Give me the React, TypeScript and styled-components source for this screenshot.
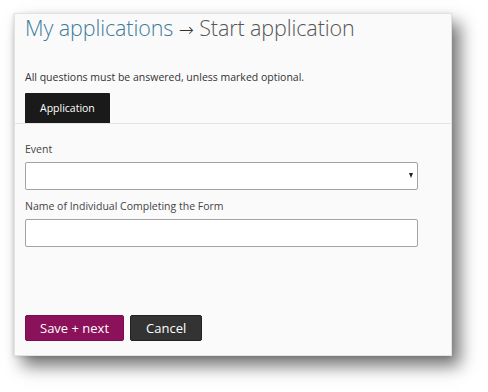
import React from "react";
import styled, { createGlobalStyle } from "styled-components";

const Global = createGlobalStyle`
  html, body { margin: 0; padding: 0; background: #ffffff; }
  body { font-family: "Open Sans", "Liberation Sans", sans-serif; }
  * { box-sizing: border-box; }
`;

const Stage = styled.div`
  width: 488px;
  height: 392px;
  padding: 13px 0 0 14px;
`;

const Panel = styled.div`
  width: 438px;
  height: 343px;
  background: #fafafa;
  border: 1px solid #e2e2e2;
  box-shadow: 8px 10px 16px rgba(0, 0, 0, 0.55), -1px 1px 4px rgba(0, 0, 0, 0.12);
  display: flex;
  flex-direction: column;
`;

const Header = styled.div`
  padding: 0 10px;
`;

const Title = styled.h1`
  margin: 0;
  font-size: 21.5px;
  font-weight: 300;
  line-height: 28px;
  color: #555555;
  letter-spacing: -0.1px;
`;

const Crumb = styled.span`
  color: #3a7d99;
`;

const Arrow = styled.span`
  font-family: "DejaVu Sans", sans-serif;
  font-size: 18px;
  color: #333333;
`;

const Intro = styled.p`
  margin: 26px 0 0;
  font-size: 10.5px;
  line-height: 15px;
  color: #333333;
`;

const TabBar = styled.div`
  margin-top: 8px;
  padding: 0 10px;
  border-bottom: 1px solid #e4e4e4;
  display: flex;
`;

const Tab = styled.div`
  background: #1a1a1a;
  color: #ffffff;
  font-size: 10.5px;
  line-height: 30px;
  height: 30px;
  padding: 0 15px;
  border-radius: 1px 1px 0 0;
`;

const Form = styled.div`
  padding: 18px 10px 0;
  display: flex;
  flex-direction: column;
`;

const Label = styled.label`
  font-size: 10.5px;
  line-height: 15px;
  color: #444444;
  margin-bottom: 5px;
`;

const Field = styled.div<{ $gap?: number }>`
  position: relative;
  width: 393px;
  height: 28px;
  background: #ffffff;
  border: 1px solid #a3a3a3;
  border-radius: 2px;
  margin-bottom: ${(p) => p.$gap ?? 0}px;
`;

const Caret = styled.span`
  position: absolute;
  right: 4px;
  top: 10px;
  width: 0;
  height: 0;
  border-left: 2.5px solid transparent;
  border-right: 2.5px solid transparent;
  border-top: 5px solid #222222;
`;

const Actions = styled.div`
  margin-top: auto;
  padding: 0 10px 14px;
  display: flex;
  gap: 6px;
`;

const Button = styled.button<{ $tone: string }>`
  height: 26px;
  padding: 0 ${(p) => (p.$tone === "primary" ? 14 : 15)}px;
  border: 1px solid ${(p) => (p.$tone === "primary" ? "#7a0f4e" : "#222222")};
  border-radius: 2px;
  background: ${(p) => (p.$tone === "primary" ? "#8b115a" : "#333333")};
  color: #ffffff;
  font-family: "Open Sans", "Liberation Sans", sans-serif;
  font-size: 13px;
  line-height: 24px;
`;

export default function App() {
  return (
    <>
      <Global />
      <Stage>
        <Panel>
          <Header>
            <Title>
              <Crumb>My applications</Crumb> <Arrow>→</Arrow> Start application
            </Title>
            <Intro>All questions must be answered, unless marked optional.</Intro>
          </Header>
          <TabBar>
            <Tab>Application</Tab>
          </TabBar>
          <Form>
            <Label>Event</Label>
            <Field $gap={9}>
              <Caret />
            </Field>
            <Label>Name of Individual Completing the Form</Label>
            <Field />
          </Form>
          <Actions>
            <Button $tone="primary">Save + next</Button>
            <Button $tone="secondary">Cancel</Button>
          </Actions>
        </Panel>
      </Stage>
    </>
  );
}
